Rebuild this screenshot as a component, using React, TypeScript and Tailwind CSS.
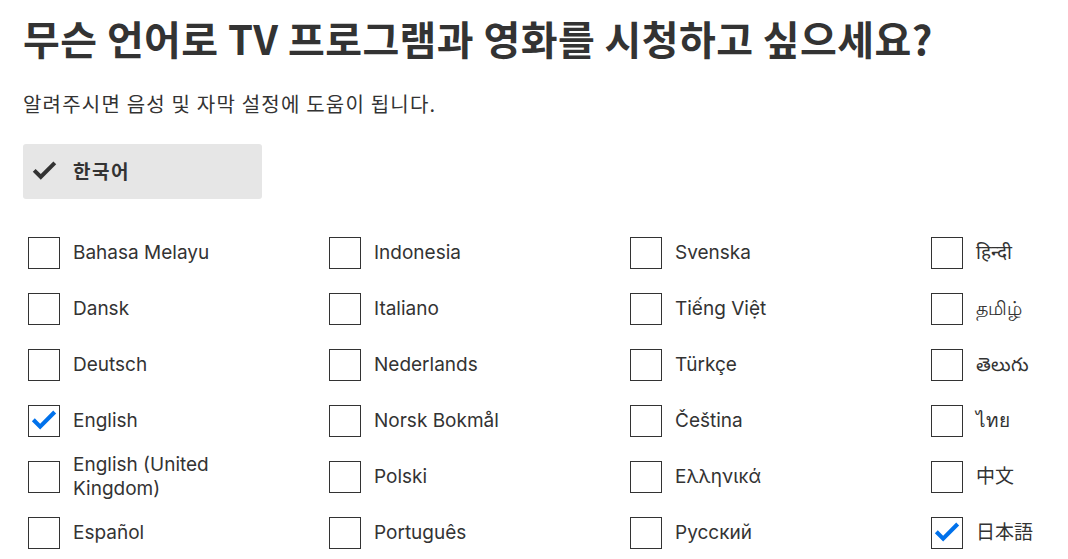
import React from "react";

const cols: { label: string; checked?: boolean }[][] = [
  [
    { label: "Bahasa Melayu" },
    { label: "Dansk" },
    { label: "Deutsch" },
    { label: "English", checked: true },
    { label: "English (United Kingdom)" },
    { label: "Español" },
  ],
  [
    { label: "Indonesia" },
    { label: "Italiano" },
    { label: "Nederlands" },
    { label: "Norsk Bokmål" },
    { label: "Polski" },
    { label: "Português" },
  ],
  [
    { label: "Svenska" },
    { label: "Tiếng Việt" },
    { label: "Türkçe" },
    { label: "Čeština" },
    { label: "Ελληνικά" },
    { label: "Русский" },
  ],
  [
    { label: "हिन्दी" },
    { label: "தமிழ்" },
    { label: "తెలుగు" },
    { label: "ไทย" },
    { label: "中文" },
    { label: "日本語", checked: true },
  ],
];

function Check({ className }: { className?: string }) {
  return (
    <svg viewBox="0 0 24 24" className={className} fill="currentColor">
      <path d="M8.7 19.3 1.6 12.2l2.5-2.5 4.6 4.6L19.9 3.1l2.5 2.5z" />
    </svg>
  );
}

export default function App() {
  const font = {
    fontFamily:
      'Inter, "Noto Sans", "Noto Sans CJK KR", "Noto Sans CJK JP", sans-serif',
  };
  const kr = { fontFamily: '"Noto Sans CJK KR", Inter, sans-serif' };
  return (
    <div className="bg-white w-[1068px] h-[559px] overflow-hidden text-[#333]" style={font}>
      <div className="pl-[23px] pt-[12px]">
        <h1
          className="text-[40px] leading-[52px] font-bold tracking-[0.4px] text-[#333] whitespace-nowrap"
          style={kr}
        >
          무슨 언어로 TV 프로그램과 영화를 시청하고 싶으세요?
        </h1>
        <p className="mt-[28px] text-[20px] leading-[24px] tracking-[1.2px] text-[#333]" style={kr}>
          알려주시면 음성 및 자막 설정에 도움이 됩니다.
        </p>
        <div className="mt-[28px] w-[239px] h-[55px] bg-[#e6e6e6] rounded-[3px] flex items-center pl-[8px]">
          <Check className="w-[27px] h-[27px] text-[#333]" />
          <span className="ml-[15px] text-[19px] font-bold tracking-[1.5px] text-[#333]" style={kr}>
            한국어
          </span>
        </div>
        <div className="mt-[38px] pl-[5px] flex">
          {cols.map((col, ci) => (
            <div key={ci} className="w-[301px] shrink-0 flex flex-col gap-[24px]">
              {col.map((it) => (
                <div key={it.label} className="flex items-center h-[32px]">
                  <div className="w-[32px] h-[32px] shrink-0 border border-[#333] bg-white flex items-center justify-center">
                    {it.checked && <Check className="w-[28px] h-[28px] text-[#0071eb]" />}
                  </div>
                  <span className="ml-[13px] max-w-[150px] text-[19px] leading-[24px] text-[#333]">
                    {it.label}
                  </span>
                </div>
              ))}
            </div>
          ))}
        </div>
      </div>
    </div>
  );
}
